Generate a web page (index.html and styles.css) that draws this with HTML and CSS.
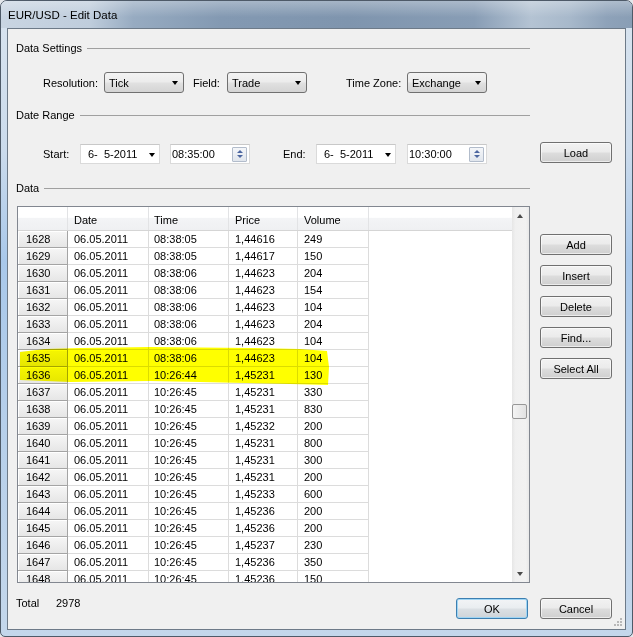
FILE: index.html
```html
<!DOCTYPE html>
<html>
<head>
<meta charset="utf-8">
<title>EUR/USD - Edit Data</title>
<link rel="stylesheet" href="styles.css">
</head>
<body>
<div class="window">
  <div class="titlebar"><span class="title">EUR/USD - Edit Data</span></div>
  <div class="client">
    <div class="ghead g1"><span>Data Settings</span><i></i></div>
    <div class="row r1">
      <span class="lab w61">Resolution:</span>
      <div class="combo"><span>Tick</span><b class="caret"></b></div>
      <span class="lab w34 ml9">Field:</span>
      <div class="combo"><span>Trade</span><b class="caret"></b></div>
      <span class="lab w61 ml39">Time Zone:</span>
      <div class="combo"><span>Exchange</span><b class="caret"></b></div>
    </div>
    <div class="ghead g2"><span>Date Range</span><i></i></div>
    <div class="row r2">
      <span class="lab w37 mt2">Start:</span>
      <div class="dpick"><span>6-&nbsp; 5-2011</span><b class="caret"></b></div>
      <div class="tpick ml10"><span>08:35:00</span><div class="spin"><b class="up"></b><b class="dn"></b></div></div>
      <span class="lab w33 ml33 mt2">End:</span>
      <div class="dpick"><span>6-&nbsp; 5-2011</span><b class="caret"></b></div>
      <div class="tpick ml11"><span>10:30:00</span><div class="spin"><b class="up"></b><b class="dn"></b></div></div>
      <button class="btn ml53">Load</button>
    </div>
    <div class="ghead g3"><span>Data</span><i></i></div>
    <div class="datasec">
      <div class="grid">
        <div class="sheet">
          <div class="hdr">
            <span class="c rh"></span><span class="c cd">Date</span><span class="c ct">Time</span><span class="c cp">Price</span><span class="c cv">Volume</span><span class="c rest"></span>
          </div>
          <div class="rows">
            <div class="tr"><span class="rh">1628</span><span class="c cd">06.05.2011</span><span class="c ct">08:38:05</span><span class="c cp">1,44616</span><span class="c cv">249</span></div>
            <div class="tr"><span class="rh">1629</span><span class="c cd">06.05.2011</span><span class="c ct">08:38:05</span><span class="c cp">1,44617</span><span class="c cv">150</span></div>
            <div class="tr"><span class="rh">1630</span><span class="c cd">06.05.2011</span><span class="c ct">08:38:06</span><span class="c cp">1,44623</span><span class="c cv">204</span></div>
            <div class="tr"><span class="rh">1631</span><span class="c cd">06.05.2011</span><span class="c ct">08:38:06</span><span class="c cp">1,44623</span><span class="c cv">154</span></div>
            <div class="tr"><span class="rh">1632</span><span class="c cd">06.05.2011</span><span class="c ct">08:38:06</span><span class="c cp">1,44623</span><span class="c cv">104</span></div>
            <div class="tr"><span class="rh">1633</span><span class="c cd">06.05.2011</span><span class="c ct">08:38:06</span><span class="c cp">1,44623</span><span class="c cv">204</span></div>
            <div class="tr"><span class="rh">1634</span><span class="c cd">06.05.2011</span><span class="c ct">08:38:06</span><span class="c cp">1,44623</span><span class="c cv">104</span></div>
            <div class="tr"><span class="rh">1635</span><span class="c cd">06.05.2011</span><span class="c ct">08:38:06</span><span class="c cp">1,44623</span><span class="c cv">104</span></div>
            <div class="tr"><span class="rh">1636</span><span class="c cd">06.05.2011</span><span class="c ct">10:26:44</span><span class="c cp">1,45231</span><span class="c cv">130</span></div>
            <div class="tr"><span class="rh">1637</span><span class="c cd">06.05.2011</span><span class="c ct">10:26:45</span><span class="c cp">1,45231</span><span class="c cv">330</span></div>
            <div class="tr"><span class="rh">1638</span><span class="c cd">06.05.2011</span><span class="c ct">10:26:45</span><span class="c cp">1,45231</span><span class="c cv">830</span></div>
            <div class="tr"><span class="rh">1639</span><span class="c cd">06.05.2011</span><span class="c ct">10:26:45</span><span class="c cp">1,45232</span><span class="c cv">200</span></div>
            <div class="tr"><span class="rh">1640</span><span class="c cd">06.05.2011</span><span class="c ct">10:26:45</span><span class="c cp">1,45231</span><span class="c cv">800</span></div>
            <div class="tr"><span class="rh">1641</span><span class="c cd">06.05.2011</span><span class="c ct">10:26:45</span><span class="c cp">1,45231</span><span class="c cv">300</span></div>
            <div class="tr"><span class="rh">1642</span><span class="c cd">06.05.2011</span><span class="c ct">10:26:45</span><span class="c cp">1,45231</span><span class="c cv">200</span></div>
            <div class="tr"><span class="rh">1643</span><span class="c cd">06.05.2011</span><span class="c ct">10:26:45</span><span class="c cp">1,45233</span><span class="c cv">600</span></div>
            <div class="tr"><span class="rh">1644</span><span class="c cd">06.05.2011</span><span class="c ct">10:26:45</span><span class="c cp">1,45236</span><span class="c cv">200</span></div>
            <div class="tr"><span class="rh">1645</span><span class="c cd">06.05.2011</span><span class="c ct">10:26:45</span><span class="c cp">1,45236</span><span class="c cv">200</span></div>
            <div class="tr"><span class="rh">1646</span><span class="c cd">06.05.2011</span><span class="c ct">10:26:45</span><span class="c cp">1,45237</span><span class="c cv">230</span></div>
            <div class="tr"><span class="rh">1647</span><span class="c cd">06.05.2011</span><span class="c ct">10:26:45</span><span class="c cp">1,45236</span><span class="c cv">350</span></div>
            <div class="tr"><span class="rh">1648</span><span class="c cd">06.05.2011</span><span class="c ct">10:26:45</span><span class="c cp">1,45236</span><span class="c cv">150</span></div>
          </div>
        </div>
        <div class="vscroll">
          <div class="sbtn"><b class="sup"></b></div>
          <div class="track"><div class="thumb"></div></div>
          <div class="sbtn"><b class="sdn"></b></div>
        </div>
        <svg class="marker" width="330" height="190" viewBox="0 0 330 190">
          <polygon points="2,145 27,142 62,141 132,140 232,141 282,142 309,144 311,160 310,178 272,177 182,175 132,174 52,175 2,173" fill="#ffff00"/>
        </svg>
      </div>
      <div class="side">
        <button class="btn">Add</button>
        <button class="btn">Insert</button>
        <button class="btn">Delete</button>
        <button class="btn">Find...</button>
        <button class="btn">Select All</button>
      </div>
    </div>
    <div class="bottom">
      <span class="total">Total</span><span class="count">2978</span>
      <button class="btn ok">OK</button>
      <button class="btn ml12">Cancel</button>
    </div>
    <svg class="grip" width="9" height="9" viewBox="0 0 9 9">
      <rect x="6" y="0" width="2" height="2" fill="#b8b8b8"/>
      <rect x="3" y="3" width="2" height="2" fill="#b8b8b8"/>
      <rect x="6" y="3" width="2" height="2" fill="#b8b8b8"/>
      <rect x="0" y="6" width="2" height="2" fill="#b8b8b8"/>
      <rect x="3" y="6" width="2" height="2" fill="#b8b8b8"/>
      <rect x="6" y="6" width="2" height="2" fill="#b8b8b8"/>
    </svg>
  </div>
</div>
</body>
</html>
```
FILE: styles.css
```css
* { box-sizing: border-box; }
html, body { margin: 0; padding: 0; }
body {
  background: #e4e7eb;
  font-family: "Liberation Sans", Arial, sans-serif;
  font-size: 11px;
  color: #000;
}
.window {
  width: 633px;
  height: 637px;
  border: 1px solid #4e5a68;
  border-radius: 7px 7px 5px 5px;
  padding: 0 6px 6px;
  overflow: hidden;
  background: linear-gradient(to bottom, #d9e4ef 0px, #cbdbec 150px, #a9c8ea 260px, #b6cfea 420px, #c4d7eb 100%);
}
.titlebar {
  height: 27px;
  margin: 0 -6px;
  padding: 1px 0 0 7px;
  display: flex;
  align-items: center;
  font-size: 11.5px;
  background:
    linear-gradient(to bottom, rgba(255,255,255,0.30), rgba(255,255,255,0) 60%),
    linear-gradient(to right, #c9d5e2 0%, #bfcddc 14%, #97abc1 21%, #8399b2 35%, #7f95ae 55%, #889db5 75%, #b4c3d3 84%, #a8b9cb 90%, #8ea2b9 96%, #899eb5 100%);
}
.client {
  position: relative;
  width: 619px;
  height: 602px;
  border: 1px solid #6d7a88;
  background: #f0f0f0;
  padding: 0 8px;
}
.ghead {
  display: flex;
  align-items: center;
  width: 514px;
  height: 14px;
  line-height: 14px;
}
.ghead i { flex: 1; height: 1px; background: #a0a0a0; margin-left: 5px; }
.g1 { margin-top: 12px; }
.g2 { margin-top: 15px; }
.g3 { margin-top: 17px; }
.row { display: flex; }
.r1 { margin-top: 17px; height: 21px; padding-left: 27px; align-items: center; }
.r2 { margin-top: 20px; height: 22px; padding-left: 27px; align-items: flex-start; }
.lab { flex: none; white-space: nowrap; }
.w61 { width: 61px; }
.w34 { width: 34px; }
.w37 { width: 37px; }
.w33 { width: 33px; }
.ml9 { margin-left: 9px; }
.ml10 { margin-left: 10px; }
.ml11 { margin-left: 11px; }
.ml12 { margin-left: 12px; }
.ml33 { margin-left: 33px; }
.ml39 { margin-left: 39px; }
.ml53 { margin-left: 53px; }
.mt2 { margin-top: 2px; line-height: 21px; }

.combo {
  flex: none;
  width: 80px;
  height: 21px;
  border: 1px solid #707070;
  border-radius: 3px;
  background: linear-gradient(to bottom, #f3f3f3 0%, #ececec 45%, #e0e0e0 55%, #d4d4d4 100%);
  display: flex;
  align-items: center;
  justify-content: space-between;
  padding: 0 5px 0 4px;
}
.caret {
  width: 0; height: 0;
  border-left: 3.5px solid transparent;
  border-right: 3.5px solid transparent;
  border-top: 4px solid #000;
  margin-top: 1px;
}
.dpick {
  flex: none;
  width: 80px;
  height: 20px;
  margin-top: 2px;
  border: 1px solid #dadada;
  border-top-color: #c8c8c8;
  background: #fff;
  display: flex;
  align-items: center;
  justify-content: space-between;
  padding: 0 4px 0 7px;
}
.tpick {
  flex: none;
  width: 80px;
  height: 20px;
  margin-top: 2px;
  border: 1px solid #dadada;
  border-top-color: #c8c8c8;
  background: #fff;
  display: flex;
  align-items: center;
  justify-content: space-between;
  padding: 0 2px 0 1px;
}
.spin {
  width: 15px;
  height: 15px;
  border: 1px solid #b2bccb;
  border-radius: 1px;
  background: linear-gradient(to bottom, #f4f6f9, #e1e6ed);
  display: flex;
  flex-direction: column;
  align-items: center;
  justify-content: space-around;
  padding: 1px 0;
}
.spin .up {
  width: 0; height: 0;
  border-left: 3px solid transparent;
  border-right: 3px solid transparent;
  border-bottom: 3px solid #4c66a0;
}
.spin .dn {
  width: 0; height: 0;
  border-left: 3px solid transparent;
  border-right: 3px solid transparent;
  border-top: 3px solid #4c66a0;
}
.btn {
  flex: none;
  width: 72px;
  height: 21px;
  padding: 0;
  border: 1px solid #707070;
  border-radius: 3px;
  font: inherit;
  color: #000;
  background: linear-gradient(to bottom, #f2f2f2 0%, #ebebeb 48%, #dddddd 52%, #cfcfcf 100%);
  box-shadow: inset 0 0 0 1px rgba(255,255,255,0.6);
  text-align: center;
  line-height: 18px;
}

.datasec { display: flex; margin-top: 11px; padding-left: 1px; }
.grid {
  position: relative;
  flex: none;
  width: 513px;
  height: 377px;
  border: 1px solid #828790;
  background: #fff;
  display: flex;
  overflow: hidden;
}
.sheet { width: 494px; overflow: hidden; }
.hdr {
  display: flex;
  height: 24px;
  border-bottom: 1px solid #d5d5d5;
  background: linear-gradient(to bottom, #ffffff 0%, #ffffff 45%, #f3f4f6 50%, #eff0f2 100%);
}
.hdr .c { height: 23px; padding-top: 7px; border-right: 1px solid #e2e3e5; }
.hdr .rh { width: 50px; }
.hdr .rest { flex: 1; border-right: 0; }
.c { flex: none; padding-left: 6px; white-space: nowrap; }
.cd { width: 81px; }
.ct { width: 80px; padding-left: 5px; }
.cp { width: 69px; }
.cv { width: 71px; }
.tr { display: flex; height: 17px; }
.tr .c {
  height: 17px;
  line-height: 16px;
  border-right: 1px solid #dcdcdc;
  border-bottom: 1px solid #dcdcdc;
}
.tr .rh {
  flex: none;
  width: 50px;
  height: 17px;
  padding: 1px 0 0 8px;
  line-height: 14px;
  border-right: 1px solid #a4a4a4;
  border-bottom: 1px solid #a4a4a4;
  background: linear-gradient(to bottom, #f6f6f6, #e6e6e6);
  box-shadow: inset 1px 1px 0 #ffffff;
}
.vscroll {
  width: 17px;
  display: flex;
  flex-direction: column;
  background: linear-gradient(to right, #e6e6e6, #f0f0f0 20%, #f2f2f2 80%, #e9e9e9);
}
.sbtn { height: 17px; display: flex; align-items: center; justify-content: center; }
.sup {
  width: 0; height: 0;
  border-left: 3.5px solid transparent;
  border-right: 3.5px solid transparent;
  border-bottom: 4px solid #4a4a4a;
  margin-left: -1px;
}
.sdn {
  width: 0; height: 0;
  border-left: 3.5px solid transparent;
  border-right: 3.5px solid transparent;
  border-top: 4px solid #4a4a4a;
  margin-left: -1px;
}
.track { flex: 1; }
.thumb {
  margin-top: 180px;
  width: 15px;
  height: 15px;
  border: 1px solid #979797;
  border-radius: 2px;
  background: linear-gradient(to right, #f4f4f4, #e2e2e2);
}
.marker {
  position: absolute;
  left: 0;
  top: 0;
  mix-blend-mode: multiply;
  pointer-events: none;
}
.side {
  display: flex;
  flex-direction: column;
  gap: 10px;
  margin-left: 10px;
  padding-top: 28px;
}
.bottom {
  display: flex;
  align-items: flex-start;
  width: 596px;
  margin-top: 15px;
}
.total { width: 40px; line-height: 13px; margin-top: -1px; }
.count { line-height: 13px; margin-top: -1px; }
.ok {
  margin-left: auto;
  border-color: #3c7fb1;
  box-shadow: inset 0 0 0 1px #9fd5f4;
  background: linear-gradient(to bottom, #f2f4f6 0%, #e9edf0 48%, #dbe0e4 52%, #ced4d9 100%);
}
.grip { position: absolute; right: 2px; bottom: 2px; }
```
